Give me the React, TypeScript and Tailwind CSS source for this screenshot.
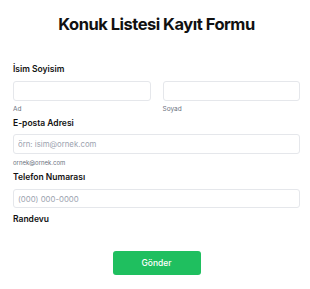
export default function App() {
  return (
    <div className="min-h-[289px] w-[310px] bg-white pl-[13px] pr-[10px] pt-[12px] font-['Inter',sans-serif] text-[#111]">
      <h1 className="text-center text-[16.5px] font-bold leading-[24px] tracking-[-0.03em] text-[#111]">Konuk Listesi Kayıt Formu</h1>

      <div className="mt-[27px]">
        <label className="block text-[8.5px] font-semibold leading-[12px]">İsim Soyisim</label>
        <div className="mt-[6px] grid grid-cols-2 gap-[12px]">
          <div>
            <input className="block h-[20px] w-full rounded-[3px] border border-[#e5e7eb] bg-white px-[4px] text-[8px] outline-none" />
            <span className="mt-[4px] block text-[6.5px] leading-[9px] text-[#6b7280]">Ad</span>
          </div>
          <div>
            <input className="block h-[20px] w-full rounded-[3px] border border-[#e5e7eb] bg-white px-[4px] text-[8px] outline-none" />
            <span className="mt-[4px] block text-[6.5px] leading-[9px] text-[#6b7280]">Soyad</span>
          </div>
        </div>
      </div>

      <div className="mt-[3px]">
        <label className="block text-[8.5px] font-semibold leading-[12px]">E-posta Adresi</label>
        <input
          placeholder="örn: isim@ornek.com"
          className="mt-[5px] block h-[20px] w-full rounded-[3px] border border-[#e5e7eb] bg-white px-[4px] text-[7.8px] outline-none placeholder:text-[#9ca3af]"
        />
        <span className="mt-[4px] block text-[6px] leading-[9px] text-[#6b7280]">ornek@ornek.com</span>
      </div>

      <div className="mt-[4px]">
        <label className="block text-[8.5px] font-semibold leading-[12px]">Telefon Numarası</label>
        <input
          placeholder="(000) 000-0000"
          className="mt-[6px] block h-[19px] w-full rounded-[3px] border border-[#e5e7eb] bg-white px-[4px] text-[7.8px] outline-none placeholder:text-[#9ca3af]"
        />
      </div>

      <div className="mt-[5px]">
        <label className="block text-[8.5px] font-semibold leading-[12px]">Randevu</label>
      </div>

      <div className="mt-[26px] flex justify-center">
        <button className="h-[24px] w-[88px] rounded-[3px] bg-[#1fbf5f] text-[8.5px] font-medium text-white">Gönder</button>
      </div>
    </div>
  )
}
